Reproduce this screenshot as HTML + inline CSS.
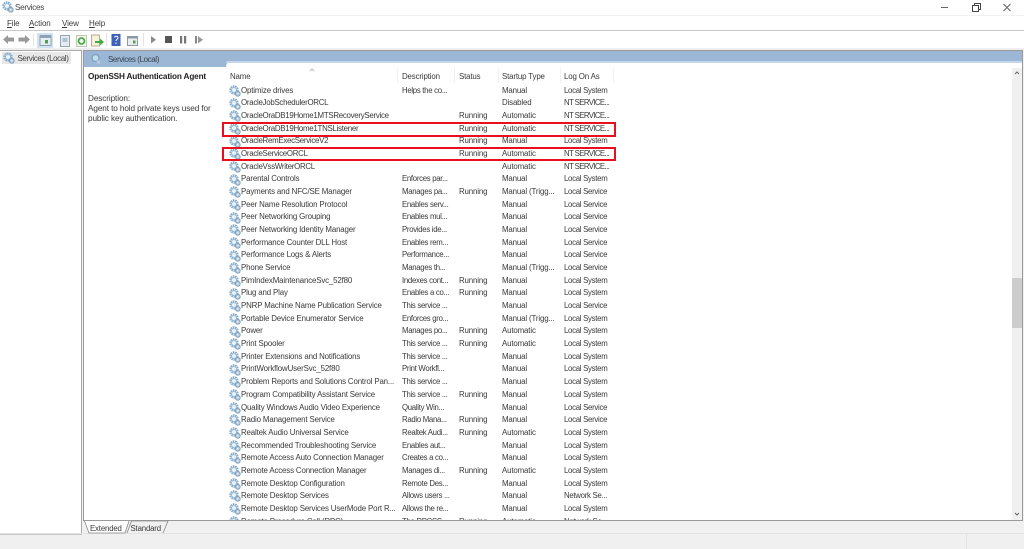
<!DOCTYPE html>
<html><head><meta charset="utf-8"><title>Services</title>
<style>
html,body{margin:0;padding:0;width:1024px;height:549px;overflow:hidden;background:#f0f0f0;}
body{font-family:"Liberation Sans",sans-serif;font-size:7.9px;letter-spacing:-.15px;color:#3a3a3a;position:relative;}
#wrap{position:absolute;left:0;top:0;width:1024px;height:549px;filter:blur(.35px);}
.a{position:absolute;white-space:nowrap;}
.r{position:absolute;left:0;width:800px;height:12px;line-height:12px;white-space:nowrap;}
.r span{position:absolute;top:-.25px;}
.r .n{left:241px}.r .d{left:402px;font-size:7.8px;letter-spacing:-.3px}.r .s{left:459px}.r .t{left:502px}.r .l{left:564px;font-size:7.8px;letter-spacing:-.28px}
.r .x{letter-spacing:-.6px}
.r .o{letter-spacing:-.28px}
.r svg{position:absolute;left:229px;top:0;width:12px;height:12px;}
.hl{position:absolute;left:222px;width:390px;border:2px solid #e8101f;}
.sl{font-size:8px;letter-spacing:-.4px;line-height:11px}
.m{font-size:8px;letter-spacing:-.1px;line-height:11px}
.b{font-size:8.2px;letter-spacing:-.1px}
</style></head><body>
<svg width="0" height="0" style="position:absolute"><defs>
<symbol id="g" viewBox="0 0 12 12">
<circle cx="5" cy="5" r="3.7" fill="none" stroke="#86afd0" stroke-width="2" stroke-dasharray="1.7 .6"/>
<circle cx="5" cy="5" r="2.4" fill="#eaf2f8" stroke="#8fb4d2" stroke-width=".7"/>
<circle cx="8.8" cy="8.8" r="2.4" fill="#b4c9da" stroke="#7f9db8" stroke-width=".9"/>
<circle cx="8.8" cy="8.8" r=".8" fill="#f2f6fa"/>
</symbol></defs></svg>
<div id="wrap">
<div class="a" style="left:0;top:0;width:1024px;height:30px;background:#fff"></div>
<div class="a" style="left:0;top:15px;width:1024px;height:1px;background:#f1f1f1"></div>
<div class="a" style="left:0;top:30px;width:1024px;height:1px;background:#c8c8c8"></div>
<div class="a" style="left:0;top:31px;width:1024px;height:17px;background:#fff"></div>
<div class="a" style="left:0;top:48px;width:1024px;height:2px;background:#eeeeee"></div>
<svg class="a" style="left:2px;top:1px" width="12" height="12"><use href="#g"/></svg>
<div class="a" style="left:15px;top:2px;font-size:8.2px;letter-spacing:-.3px;line-height:11px;color:#444">Services</div>
<div class="a m" style="left:7px;top:18px"><u style="text-decoration-thickness:.5px">F</u>ile</div>
<div class="a m" style="left:29px;top:18px"><u style="text-decoration-thickness:.5px">A</u>ction</div>
<div class="a m" style="left:62px;top:18px"><u style="text-decoration-thickness:.5px">V</u>iew</div>
<div class="a m" style="left:89px;top:18px"><u style="text-decoration-thickness:.5px">H</u>elp</div>
<svg class="a" style="left:0;top:31px" width="210" height="17" viewBox="0 0 210 17">
<path d="M3 8.5L8 4V6.5H14V10.5H8V13Z" fill="#9a9a9a"/>
<path d="M30 8.5L25 4V6.5H18.500V10.500H25V13Z" fill="#9a9a9a"/>
<rect x="33" y="2" width=".8" height="13" fill="#ddd"/>
<rect x="37" y="2" width="16" height="15" fill="#cfe3f5"/>
<rect x="40" y="4.500" width="11" height="10" fill="#e6edf3" stroke="#7d8f9f" stroke-width=".8"/>
<rect x="40" y="4.500" width="11" height="2.500" fill="#8fa3b5"/>
<rect x="45" y="9" width="3" height="3.500" fill="#4aa548"/>
<rect x="60.500" y="4.500" width="9" height="11" fill="#e5ebef" stroke="#93a5b4"/>
<rect x="62.500" y="7" width="5" height="4" fill="#aec1d0"/>
<rect x="76.500" y="4.500" width="10" height="11" fill="#f1f4ec" stroke="#bfc7b5"/>
<circle cx="81.500" cy="10" r="3" fill="none" stroke="#3fa33c" stroke-width="1.600"/>
<rect x="91.500" y="4" width="8" height="11" fill="#f8f3d6" stroke="#b5ae8c"/>
<path d="M95 10H100V7.500L104 11L100 14.500V12H95Z" fill="#45a745"/>
<rect x="106" y="2" width=".8" height="13" fill="#ddd"/>
<rect x="111.500" y="3" width="9" height="12" fill="#3f5fb8"/>
<path d="M114.500 6.500C114.500 4.800 118 4.800 118 6.800C118 8.300 116 8.300 116 10M116 11.500V13" fill="none" stroke="#fff" stroke-width="1"/>
<rect x="127.500" y="5.500" width="10" height="9" fill="#e8edf0" stroke="#8b9aa6"/>
<rect x="127" y="5" width="11" height="2.500" fill="#8b9aa6"/>
<rect x="133" y="9.500" width="2.500" height="3" fill="#4aa548"/>
<rect x="143" y="2" width=".8" height="13" fill="#ddd"/>
<path d="M151 5L156 8.800L151 12.500Z" fill="#8b8b8b"/>
<rect x="165" y="5" width="7" height="7" fill="#555"/>
<rect x="180" y="5" width="2.200" height="7.500" fill="#777"/>
<rect x="184" y="5" width="2.200" height="7.500" fill="#777"/>
<rect x="195" y="5" width="2" height="7.500" fill="#888"/>
<path d="M198 5L203 8.800L198 12.500Z" fill="#999"/>
</svg>
<svg class="a" style="left:924px;top:0" width="100" height="15" viewBox="0 0 100 15">
<rect x="17" y="7" width="7" height="1" fill="#666"/>
<rect x="48.500" y="5.500" width="6" height="6" fill="#fff" stroke="#444"/>
<path d="M50.500 5V3.500H56.500V9.500H55" fill="none" stroke="#444"/>
<path d="M79.500 4L86.500 11M86.500 4L79.500 11" stroke="#666" fill="none"/>
</svg>

<div class="a" style="left:0;top:50px;width:81px;height:483px;background:#fff;border-right:1px solid #a8a8a8;border-top:1px solid #a8a8a8;border-bottom:1px solid #c8c8c8"></div>
<div class="a" style="left:2px;top:52px;width:69px;height:12px;background:#e8e8e8"></div>
<svg class="a" style="left:3px;top:52px" width="12" height="12"><use href="#g"/></svg>
<div class="a sl" style="left:17.500px;top:52.500px;color:#444">Services (Local)</div>

<div class="a" style="left:83px;top:50px;width:940px;height:471px;background:#fff;border:0;box-shadow:inset 0 0 0 1px #9a9a9a"></div>
<div class="a" style="left:84px;top:51px;width:938px;height:16px;background:#9bb7d5"></div>
<div class="a" style="left:226px;top:61px;width:796px;height:7px;background:#fff;border-radius:6px 0 0 0"></div>
<div class="a" style="left:226px;top:61px;width:796px;height:2px;background:#c5d6e8;border-radius:6px 0 0 0"></div>
<svg class="a" style="left:90px;top:53px" width="12" height="12" viewBox="0 0 12 12"><circle cx="5.500" cy="5" r="3.500" fill="#c8dcec" stroke="#7fa6c8" stroke-width="1.500"/><circle cx="8.500" cy="9" r="1.800" fill="#b6cadb"/></svg>
<div class="a sl" style="left:108px;top:54px;color:#3a4450">Services (Local)</div>

<div class="a" style="left:88px;top:71px;line-height:11px;font-weight:bold;font-size:8.2px;letter-spacing:-.15px;color:#222">OpenSSH Authentication Agent</div>
<div class="a b" style="left:88px;top:94px;line-height:10px">Description:<br>Agent to hold private keys used for<br>public key authentication.</div>

<div class="a" style="left:230px;top:71px;line-height:11px;">Name</div>
<div class="a" style="left:402px;top:71px;line-height:11px;">Description</div>
<div class="a" style="left:459px;top:71px;line-height:11px;">Status</div>
<div class="a" style="left:502px;top:71px;line-height:11px;">Startup Type</div>
<div class="a" style="left:564px;top:71px;line-height:11px;">Log On As</div>
<div class="a" style="left:397px;top:68px;width:1px;height:15px;background:#f0f0f0"></div>
<div class="a" style="left:454px;top:68px;width:1px;height:15px;background:#f0f0f0"></div>
<div class="a" style="left:498px;top:68px;width:1px;height:15px;background:#f0f0f0"></div>
<div class="a" style="left:560px;top:68px;width:1px;height:15px;background:#f0f0f0"></div>
<div class="a" style="left:613px;top:68px;width:1px;height:15px;background:#f0f0f0"></div>
<svg class="a" style="left:309px;top:68px" width="6" height="4"><path d="M1 3L3 1L5 3" fill="none" stroke="#bbb"/></svg>

<div style="position:absolute;left:0;top:0;width:1012px;height:515px;overflow:hidden">
<div class="r" style="top:85px"><svg><use href="#g"/></svg><span class="n">Optimize drives</span><span class="d">Helps the co...</span><span class="t">Manual</span><span class="l">Local System</span></div>
<div class="r" style="top:97.670px"><svg><use href="#g"/></svg><span class="n o">OracleJobSchedulerORCL</span><span class="t">Disabled</span><span class="l x">NT SERVICE...</span></div>
<div class="r" style="top:110.340px"><svg><use href="#g"/></svg><span class="n o">OracleOraDB19Home1MTSRecoveryService</span><span class="s">Running</span><span class="t">Automatic</span><span class="l x">NT SERVICE...</span></div>
<div class="r" style="top:123px"><svg><use href="#g"/></svg><span class="n o">OracleOraDB19Home1TNSListener</span><span class="s">Running</span><span class="t">Automatic</span><span class="l x">NT SERVICE...</span></div>
<div class="r" style="top:135.680px"><svg><use href="#g"/></svg><span class="n o">OracleRemExecServiceV2</span><span class="s">Running</span><span class="t">Manual</span><span class="l">Local System</span></div>
<div class="r" style="top:148.350px"><svg><use href="#g"/></svg><span class="n o">OracleServiceORCL</span><span class="s">Running</span><span class="t">Automatic</span><span class="l x">NT SERVICE...</span></div>
<div class="r" style="top:161px"><svg><use href="#g"/></svg><span class="n o">OracleVssWriterORCL</span><span class="t">Automatic</span><span class="l x">NT SERVICE...</span></div>
<div class="r" style="top:173.700px"><svg><use href="#g"/></svg><span class="n">Parental Controls</span><span class="d">Enforces par...</span><span class="t">Manual</span><span class="l">Local System</span></div>
<div class="r" style="top:186.360px"><svg><use href="#g"/></svg><span class="n">Payments and NFC/SE Manager</span><span class="d">Manages pa...</span><span class="s">Running</span><span class="t">Manual (Trigg...</span><span class="l">Local Service</span></div>
<div class="r" style="top:199px"><svg><use href="#g"/></svg><span class="n">Peer Name Resolution Protocol</span><span class="d">Enables serv...</span><span class="t">Manual</span><span class="l">Local Service</span></div>
<div class="r" style="top:211.700px"><svg><use href="#g"/></svg><span class="n">Peer Networking Grouping</span><span class="d">Enables mul...</span><span class="t">Manual</span><span class="l">Local Service</span></div>
<div class="r" style="top:224.370px"><svg><use href="#g"/></svg><span class="n">Peer Networking Identity Manager</span><span class="d">Provides ide...</span><span class="t">Manual</span><span class="l">Local Service</span></div>
<div class="r" style="top:237px"><svg><use href="#g"/></svg><span class="n">Performance Counter DLL Host</span><span class="d">Enables rem...</span><span class="t">Manual</span><span class="l">Local Service</span></div>
<div class="r" style="top:249.700px"><svg><use href="#g"/></svg><span class="n">Performance Logs &amp; Alerts</span><span class="d">Performance...</span><span class="t">Manual</span><span class="l">Local Service</span></div>
<div class="r" style="top:262.380px"><svg><use href="#g"/></svg><span class="n">Phone Service</span><span class="d">Manages th...</span><span class="t">Manual (Trigg...</span><span class="l">Local Service</span></div>
<div class="r" style="top:275px"><svg><use href="#g"/></svg><span class="n">PimIndexMaintenanceSvc_52f80</span><span class="d">Indexes cont...</span><span class="s">Running</span><span class="t">Manual</span><span class="l">Local System</span></div>
<div class="r" style="top:287.720px"><svg><use href="#g"/></svg><span class="n">Plug and Play</span><span class="d">Enables a co...</span><span class="s">Running</span><span class="t">Manual</span><span class="l">Local System</span></div>
<div class="r" style="top:300.400px"><svg><use href="#g"/></svg><span class="n">PNRP Machine Name Publication Service</span><span class="d">This service ...</span><span class="t">Manual</span><span class="l">Local Service</span></div>
<div class="r" style="top:313px"><svg><use href="#g"/></svg><span class="n">Portable Device Enumerator Service</span><span class="d">Enforces gro...</span><span class="t">Manual (Trigg...</span><span class="l">Local System</span></div>
<div class="r" style="top:325.730px"><svg><use href="#g"/></svg><span class="n">Power</span><span class="d">Manages po...</span><span class="s">Running</span><span class="t">Automatic</span><span class="l">Local System</span></div>
<div class="r" style="top:338.400px"><svg><use href="#g"/></svg><span class="n">Print Spooler</span><span class="d">This service ...</span><span class="s">Running</span><span class="t">Automatic</span><span class="l">Local System</span></div>
<div class="r" style="top:351px"><svg><use href="#g"/></svg><span class="n">Printer Extensions and Notifications</span><span class="d">This service ...</span><span class="t">Manual</span><span class="l">Local System</span></div>
<div class="r" style="top:363.740px"><svg><use href="#g"/></svg><span class="n">PrintWorkflowUserSvc_52f80</span><span class="d">Print Workfl...</span><span class="t">Manual</span><span class="l">Local System</span></div>
<div class="r" style="top:376.400px"><svg><use href="#g"/></svg><span class="n">Problem Reports and Solutions Control Pan...</span><span class="d">This service ...</span><span class="t">Manual</span><span class="l">Local System</span></div>
<div class="r" style="top:389px"><svg><use href="#g"/></svg><span class="n">Program Compatibility Assistant Service</span><span class="d">This service ...</span><span class="s">Running</span><span class="t">Manual</span><span class="l">Local System</span></div>
<div class="r" style="top:401.750px"><svg><use href="#g"/></svg><span class="n">Quality Windows Audio Video Experience</span><span class="d">Quality Win...</span><span class="t">Manual</span><span class="l">Local Service</span></div>
<div class="r" style="top:414.420px"><svg><use href="#g"/></svg><span class="n">Radio Management Service</span><span class="d">Radio Mana...</span><span class="s">Running</span><span class="t">Manual</span><span class="l">Local Service</span></div>
<div class="r" style="top:427px"><svg><use href="#g"/></svg><span class="n">Realtek Audio Universal Service</span><span class="d">Realtek Audi...</span><span class="s">Running</span><span class="t">Automatic</span><span class="l">Local System</span></div>
<div class="r" style="top:439.760px"><svg><use href="#g"/></svg><span class="n">Recommended Troubleshooting Service</span><span class="d">Enables aut...</span><span class="t">Manual</span><span class="l">Local System</span></div>
<div class="r" style="top:452.430px"><svg><use href="#g"/></svg><span class="n">Remote Access Auto Connection Manager</span><span class="d">Creates a co...</span><span class="t">Manual</span><span class="l">Local System</span></div>
<div class="r" style="top:465px"><svg><use href="#g"/></svg><span class="n">Remote Access Connection Manager</span><span class="d">Manages di...</span><span class="s">Running</span><span class="t">Automatic</span><span class="l">Local System</span></div>
<div class="r" style="top:477.770px"><svg><use href="#g"/></svg><span class="n">Remote Desktop Configuration</span><span class="d">Remote Des...</span><span class="t">Manual</span><span class="l">Local System</span></div>
<div class="r" style="top:490.440px"><svg><use href="#g"/></svg><span class="n">Remote Desktop Services</span><span class="d">Allows users ...</span><span class="t">Manual</span><span class="l">Network Se...</span></div>
<div class="r" style="top:503px"><svg><use href="#g"/></svg><span class="n">Remote Desktop Services UserMode Port R...</span><span class="d">Allows the re...</span><span class="t">Manual</span><span class="l">Local System</span></div>
</div>
<div style="position:absolute;left:0;top:0;width:1012px;height:520px;overflow:hidden">
<div class="r" style="top:515.780px"><svg><use href="#g"/></svg><span class="n">Remote Procedure Call (RPC)</span><span class="d">The RPCSS ...</span><span class="s">Running</span><span class="t">Automatic</span><span class="l">Network Se...</span></div>
</div>

<div class="hl" style="top:122px;height:11px"></div>
<div class="hl" style="top:147px;height:10px"></div>

<div class="a" style="left:1012px;top:68px;width:10px;height:452px;background:#f0f0f0"></div>
<div class="a" style="left:1012px;top:278px;width:10px;height:50px;background:#cdcdcd"></div>
<svg class="a" style="left:1014px;top:70px" width="6" height="6"><path d="M1 4L3 2L5 4" fill="none" stroke="#666"/></svg>
<svg class="a" style="left:1014px;top:511px" width="6" height="6"><path d="M1 2L3 4L5 2" fill="none" stroke="#666"/></svg>

<div class="a" style="left:0;top:533px;width:1024px;height:1px;background:#e3e3e3"></div>
<div class="a" style="left:966px;top:534px;width:1px;height:15px;background:#e3e3e3"></div>
<svg class="a" style="left:84px;top:520px" width="90" height="14" viewBox="0 0 90 14">
<path d="M.5 1L5 13H41L45 1" fill="#fff" stroke="#8a8a8a" stroke-width=".8"/>
<path d="M43 13L47.500 1H84L79 13" fill="#f0f0f0" stroke="#8a8a8a" stroke-width=".8"/>
</svg>
<div class="a" style="left:90px;top:522.500px;line-height:11px;font-size:7.800px">Extended</div>
<div class="a" style="left:130.500px;top:522.500px;line-height:11px;font-size:7.800px">Standard</div>
</div>
</body></html>
